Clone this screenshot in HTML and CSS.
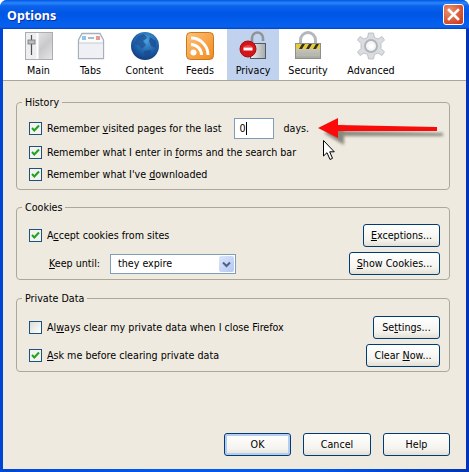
FILE: index.html
```html
<!DOCTYPE html>
<html lang="en">
<head>
    <meta charset="UTF-8">
    <title>Options</title>
    <link rel="stylesheet" href="styles.css">
</head>
<body>
    <div class="window">
        <div class="title-bar">
            <span class="title-text">Options</span>
            <span class="close-btn">
                <svg width="21" height="21" viewBox="0 0 21 21">
                    <path d="M6 6 L15 15 M15 6 L6 15" stroke="#fff" stroke-width="2.6" stroke-linecap="square"/>
                </svg>
            </span>
        </div>

        <div class="client">
            <div class="toolbar">
                <div class="tool">
                    <svg class="tool-icon" width="32" height="32" viewBox="0 0 32 32">
                        <defs>
                            <linearGradient id="mainFill" x1="0" y1="0" x2="1" y2="1">
                                <stop offset="0" stop-color="#f4f4f4"/>
                                <stop offset="0.6" stop-color="#c9c9c9"/>
                                <stop offset="1" stop-color="#e6e6e6"/>
                            </linearGradient>
                        </defs>
                        <rect x="2.5" y="2.5" width="27" height="27" fill="url(#mainFill)" stroke="#a9aeb5"/>
                        <rect x="3" y="3" width="11" height="26" fill="#eeeeee"/>
                        <path d="M14.5 3 V29" stroke="#ffffff" stroke-width="2"/>
                        <path d="M8.5 5 V25" stroke="#4c5056" stroke-width="1.2"/>
                        <rect x="5" y="10" width="7" height="4" fill="#b9bcc0" stroke="#70757b" stroke-width="0.8"/>
                    </svg>
                    <span>Main</span>
                </div>
                <div class="tool">
                    <svg class="tool-icon" width="32" height="32" viewBox="0 0 32 32">
                        <path d="M3.5 28.5 V10 L7 3.5 H25 L28.5 10 V28.5 Z" fill="#fbfbfb" stroke="#a7afbd" stroke-width="1.3"/>
                        <path d="M4 13 H28 V28 H4 Z" fill="#eef0f3"/>
                        <path d="M4 13 H28" stroke="#c7ccd3"/>
                        <rect x="7" y="6" width="4" height="4" fill="#8cc4ea"/>
                        <path d="M13 8 H19" stroke="#9aa2ad" stroke-width="1.5"/>
                        <rect x="21" y="6" width="4" height="4" fill="#e59a9a"/>
                    </svg>
                    <span>Tabs</span>
                </div>
                <div class="tool">
                    <svg class="tool-icon" width="32" height="32" viewBox="0 0 32 32">
                        <defs>
                            <radialGradient id="globeFill" cx="0.55" cy="0.3" r="0.8">
                                <stop offset="0" stop-color="#4aa3dc"/>
                                <stop offset="0.55" stop-color="#1c5fa8"/>
                                <stop offset="1" stop-color="#10306f"/>
                            </radialGradient>
                        </defs>
                        <circle cx="16" cy="16" r="14" fill="url(#globeFill)"/>
                        <path d="M9 6 L15 4 L18 8 L14 11 L17 15 L13 19 L9 15 L5 14 Z" fill="#1f5498" opacity="0.8"/>
                        <path d="M21 7 L27 11 L27 18 L22 16 L20 11 Z" fill="#1f4f94" opacity="0.85"/>
                        <path d="M15 21 L22 20 L21 27 L16 28 Z" fill="#1a4a90" opacity="0.8"/>
                    </svg>
                    <span>Content</span>
                </div>
                <div class="tool">
                    <svg class="tool-icon" width="32" height="32" viewBox="0 0 32 32">
                        <defs>
                            <linearGradient id="feedFill" x1="0" y1="0" x2="1" y2="1">
                                <stop offset="0" stop-color="#fdc27a"/>
                                <stop offset="1" stop-color="#f28a1e"/>
                            </linearGradient>
                        </defs>
                        <rect x="2.5" y="2.5" width="27" height="27" rx="4" fill="url(#feedFill)" stroke="#c8791f"/>
                        <circle cx="9.5" cy="22.5" r="3" fill="#fff"/>
                        <path d="M7 14.5 A10.5 10.5 0 0 1 17.5 25" fill="none" stroke="#fff" stroke-width="3"/>
                        <path d="M7 8 A17 17 0 0 1 24 25" fill="none" stroke="#fff" stroke-width="3"/>
                    </svg>
                    <span>Feeds</span>
                </div>
                <div class="tool tool-active">
                    <svg class="tool-icon" width="32" height="32" viewBox="0 0 32 32">
                        <defs>
                            <linearGradient id="bodyFill" x1="0" y1="0" x2="1" y2="0">
                                <stop offset="0" stop-color="#f0f0f0"/>
                                <stop offset="1" stop-color="#a7aaac"/>
                            </linearGradient>
                        </defs>
                        <path d="M15 13 V8 A5.5 5.5 0 0 1 26 8 V11" fill="none" stroke="#8e9499" stroke-width="2.6"/>
                        <rect x="13.5" y="13.5" width="15" height="15" fill="url(#bodyFill)" stroke="#4e5a66"/>
                        <circle cx="11" cy="19" r="8" fill="#d81418" stroke="#9c1014"/>
                        <path d="M6 17 A8 8 0 0 1 16 17 Z" fill="#ef6a6a" opacity="0.6"/>
                        <rect x="6.5" y="17.5" width="9" height="3" fill="#fff"/>
                    </svg>
                    <span>Privacy</span>
                </div>
                <div class="tool">
                    <svg class="tool-icon" width="32" height="32" viewBox="0 0 32 32">
                        <defs>
                            <linearGradient id="lockFill" x1="0" y1="0" x2="0" y2="1">
                                <stop offset="0" stop-color="#d8d8d0"/>
                                <stop offset="1" stop-color="#a8a89e"/>
                            </linearGradient>
                        </defs>
                        <path d="M8.5 14 V10 A7.5 7.5 0 0 1 23.5 10 V14" fill="none" stroke="#b4b8bc" stroke-width="3"/>
                        <rect x="3.5" y="13.5" width="25" height="15" fill="url(#lockFill)" stroke="#8e9087"/>
                        <rect x="4" y="14" width="24" height="5" fill="#e8c93a"/>
                        <path d="M7 19 L10 14 H13 L10 19 Z M14 19 L17 14 H20 L17 19 Z M21 19 L24 14 H27 L24 19 Z" fill="#33322c"/>
                        <path d="M4 22 H28 M4 25 H28" stroke="#bdbdb3"/>
                    </svg>
                    <span>Security</span>
                </div>
                <div class="tool">
                    <svg class="tool-icon" width="32" height="32" viewBox="0 0 32 32">
                        <path d="M13.5 3 H18.5 L19.5 7.5 L23 9 L27 6.5 L29.5 10 L26 13.5 V18.5 L29.5 22 L27 25.5 L23 23 L19.5 24.5 L18.5 29 H13.5 L12.5 24.5 L9 23 L5 25.5 L2.5 22 L6 18.5 V13.5 L2.5 10 L5 6.5 L9 9 L12.5 7.5 Z" fill="#dadcdf" stroke="#b3b8be" stroke-width="0.8"/>
                        <circle cx="16" cy="16" r="6" fill="#f6f6f6" stroke="#b0b5bb" stroke-width="2"/>
                        <circle cx="16" cy="16" r="2.5" fill="#fff"/>
                    </svg>
                    <span>Advanced</span>
                </div>
            </div>

            <div class="panel">
                <fieldset class="group">
                    <legend>History</legend>
                    <div class="history-body">
                        <div class="row row-days">
                            <span class="check">
                                <svg width="13" height="13" viewBox="0 0 13 13"><path d="M3 6 L5.3 8.5 L10 3.5" fill="none" stroke="#21a121" stroke-width="2"/></svg>
                            </span>
                            <span>Remember <u>v</u>isited pages for the last</span>
                            <span class="days-input">0<i class="caret"></i></span>
                            <span>days.</span>
                        </div>
                        <div class="row">
                            <span class="check">
                                <svg width="13" height="13" viewBox="0 0 13 13"><path d="M3 6 L5.3 8.5 L10 3.5" fill="none" stroke="#21a121" stroke-width="2"/></svg>
                            </span>
                            <span>Remember what I enter in <u>f</u>orms and the search bar</span>
                        </div>
                        <div class="row">
                            <span class="check">
                                <svg width="13" height="13" viewBox="0 0 13 13"><path d="M3 6 L5.3 8.5 L10 3.5" fill="none" stroke="#21a121" stroke-width="2"/></svg>
                            </span>
                            <span>Remember what I've <u>d</u>ownloaded</span>
                        </div>
                    </div>
                </fieldset>

                <fieldset class="group group-cookies">
                    <legend>Cookies</legend>
                    <div class="split-body">
                        <div class="row">
                            <span class="check">
                                <svg width="13" height="13" viewBox="0 0 13 13"><path d="M3 6 L5.3 8.5 L10 3.5" fill="none" stroke="#21a121" stroke-width="2"/></svg>
                            </span>
                            <span>A<u>c</u>cept cookies from sites</span>
                        </div>
                        <button class="btn btn-exceptions"><u>E</u>xceptions...</button>
                        <div class="row keep-row">
                            <span class="keep-label"><u>K</u>eep until:</span>
                            <span class="select">
                                <span>they expire</span>
                                <span class="select-arrow">
                                    <svg width="15" height="16" viewBox="0 0 15 16"><path d="M4 6.5 L7.5 10 L11 6.5" fill="none" stroke="#4d6185" stroke-width="2"/></svg>
                                </span>
                            </span>
                        </div>
                        <button class="btn btn-show"><u>S</u>how Cookies...</button>
                    </div>
                </fieldset>

                <fieldset class="group group-last">
                    <legend>Private Data</legend>
                    <div class="split-body split-private">
                        <div class="row">
                            <span class="check check-off"></span>
                            <span>Al<u>w</u>ays clear my private data when I close Firefox</span>
                        </div>
                        <button class="btn btn-settings">Se<u>t</u>tings...</button>
                        <div class="row">
                            <span class="check">
                                <svg width="13" height="13" viewBox="0 0 13 13"><path d="M3 6 L5.3 8.5 L10 3.5" fill="none" stroke="#21a121" stroke-width="2"/></svg>
                            </span>
                            <span><u>A</u>sk me before clearing private data</span>
                        </div>
                        <button class="btn btn-clear">Clear <u>N</u>ow...</button>
                    </div>
                </fieldset>

                <div class="dialog-buttons">
                    <button class="btn btn-main btn-default">OK</button>
                    <button class="btn btn-main btn-cancel">Cancel</button>
                    <button class="btn btn-main">Help</button>
                </div>
            </div>
        </div>

        <!-- annotation drawn over the dialog -->
        <svg class="arrow" width="135" height="36" viewBox="0 0 135 36">
            <defs>
                <filter id="soft" x="-10%" y="-40%" width="120%" height="180%">
                    <feGaussianBlur stdDeviation="1.6"/>
                </filter>
            </defs>
            <path d="M5 11 L25 3 L25 9 L124 11 V14 L25 14 L25 23 Z" fill="#55534a" opacity="0.65" filter="url(#soft)" transform="translate(4 5)"/>
            <path d="M3 11 L23 1 L23 8 L122 10 V14 L23 14 L23 21 Z" fill="#fb0a0a"/>
        </svg>
        <svg class="cursor" width="14" height="24" viewBox="0 0 14 24">
            <path d="M1.5 1.5 V17 L5 13.7 L8 20.5 L10.5 19.3 L7.7 12.8 H12.3 Z" fill="#fff" stroke="#000" stroke-width="1"/>
        </svg>
    </div>
</body>
</html>
```

FILE: styles.css
```css
* {
    box-sizing: border-box;
}
body {
    margin: 0;
    background: #fff;
    font-family: "DejaVu Sans", sans-serif;
    font-stretch: condensed;
    font-size: 10.65px;
    color: #000;
}
.window {
    position: relative;
    display: flex;
    flex-direction: column;
    width: 469px;
    height: 472px;
    border-radius: 7px 7px 0 0;
    overflow: hidden;
    background: linear-gradient(90deg, #0046d5, #0058ee 33%, #0058ee 67%, #0033b8);
}
.title-bar {
    display: flex;
    align-items: center;
    justify-content: space-between;
    height: 29px;
    flex: none;
    padding: 2px 5px 2px 7px;
    background: linear-gradient(180deg, #0058e6 0, #2a85f8 3px, #0a63ec 6px, #0055e5 14px, #0460ee 24px, #0a5fe8 27px, #0040c8 29px);
}
.title-text {
    padding-top: 2px;
    font-family: "Noto Sans", sans-serif;
    font-stretch: normal;
    font-size: 12.5px;
    font-weight: bold;
    color: #fff;
    text-shadow: 1px 1px 0 #0f2f9c;
}
.close-btn {
    display: block;
    width: 21px;
    height: 21px;
    border: 1px solid #fff;
    border-radius: 3px;
    background: radial-gradient(circle at 30% 30%, #e9926f, #d8492a 70%, #c0331a);
}
.close-btn svg {
    display: block;
    margin: -1px;
}
.client {
    display: flex;
    flex-direction: column;
    flex: 1;
    margin: 0 3px 3px;
    background: #eeeadf;
}
.toolbar {
    display: grid;
    grid-template-columns: 53px 51px 57px 54px 52px 58px 68px;
    flex: none;
    height: 52px;
    padding-left: 9px;
    background: #fff;
    border-bottom: 1px solid #a9a695;
}
.tool {
    display: flex;
    flex-direction: column;
    align-items: center;
    padding-top: 1px;
}
.tool-active {
    background: #c1d2ee;
}
.tool-icon {
    display: block;
    margin-bottom: 2px;
}
.panel {
    display: flex;
    flex-direction: column;
    flex: 1;
    padding: 15px 16px 13px 13px;
}
.group {
    margin: 0 0 11px;
    padding: 0;
    min-width: 0;
    border: 1px solid #aca899;
    border-radius: 4px;
}
.group legend {
    margin-left: 5px;
    padding: 0 3px;
    line-height: 13px;
}
.group-cookies {
    margin-bottom: 12px;
}
.group-last {
    margin-bottom: 0;
}
.history-body {
    display: flex;
    flex-direction: column;
    gap: 6px;
    padding: 9px 12px 7px;
}
.row {
    display: flex;
    align-items: center;
    height: 16px;
}
.row-days {
    height: 21px;
    margin-bottom: -1px;
}
.check {
    flex: none;
    width: 13px;
    height: 13px;
    margin-right: 5px;
    border: 1px solid #1c5180;
    background: #f4f3ee;
}
.check svg {
    display: block;
    margin: -1px;
}
.check-off {
    background: linear-gradient(135deg, #dcdcd7, #ffffff);
}
.days-input {
    display: flex;
    align-items: center;
    width: 40px;
    height: 21px;
    margin: 0 9px 0 13px;
    padding-left: 4px;
    border: 1px solid #7f9db9;
    background: #fff;
}
.caret {
    display: block;
    width: 1px;
    height: 13px;
    background: #000;
}
.split-body {
    display: grid;
    grid-template-columns: 1fr auto;
    grid-auto-rows: 23px;
    align-items: center;
    justify-items: end;
    row-gap: 5px;
    padding: 10px 9px 4px 12px;
}
.split-body .row {
    justify-self: start;
}
.split-private {
    padding-top: 11px;
}
.keep-row {
    padding-left: 20px;
}
.keep-label {
    width: 61px;
}
.select {
    display: flex;
    align-items: center;
    justify-content: space-between;
    width: 126px;
    height: 20px;
    padding: 1px 1px 1px 7px;
    border: 1px solid #7f9db9;
    background: #fff;
}
.select-arrow {
    display: block;
    width: 15px;
    height: 16px;
    border-radius: 2px;
    background: linear-gradient(135deg, #dce6fb, #b4c7f2);
}
.select-arrow svg {
    display: block;
}
.btn {
    display: block;
    height: 23px;
    padding: 0;
    border: 1px solid #003c74;
    border-radius: 3px;
    background: linear-gradient(180deg, #ffffff, #f4f3ee 70%, #e3dfd3);
    font: inherit;
    font-stretch: inherit;
    color: #000;
}
.btn-exceptions {
    width: 77px;
}
.btn-show {
    width: 91px;
}
.btn-settings {
    width: 67px;
}
.btn-clear {
    width: 74px;
}
.dialog-buttons {
    display: flex;
    justify-content: flex-end;
    gap: 12px;
    margin-top: auto;
}
.btn-main {
    width: 67px;
}
.btn-cancel {
    width: 68px;
}
.btn-default {
    box-shadow: inset 0 0 0 2px #b5cdf0;
}
.arrow {
    position: absolute;
    left: 315px;
    top: 117px;
}
.cursor {
    position: absolute;
    left: 322px;
    top: 139px;
}
```
